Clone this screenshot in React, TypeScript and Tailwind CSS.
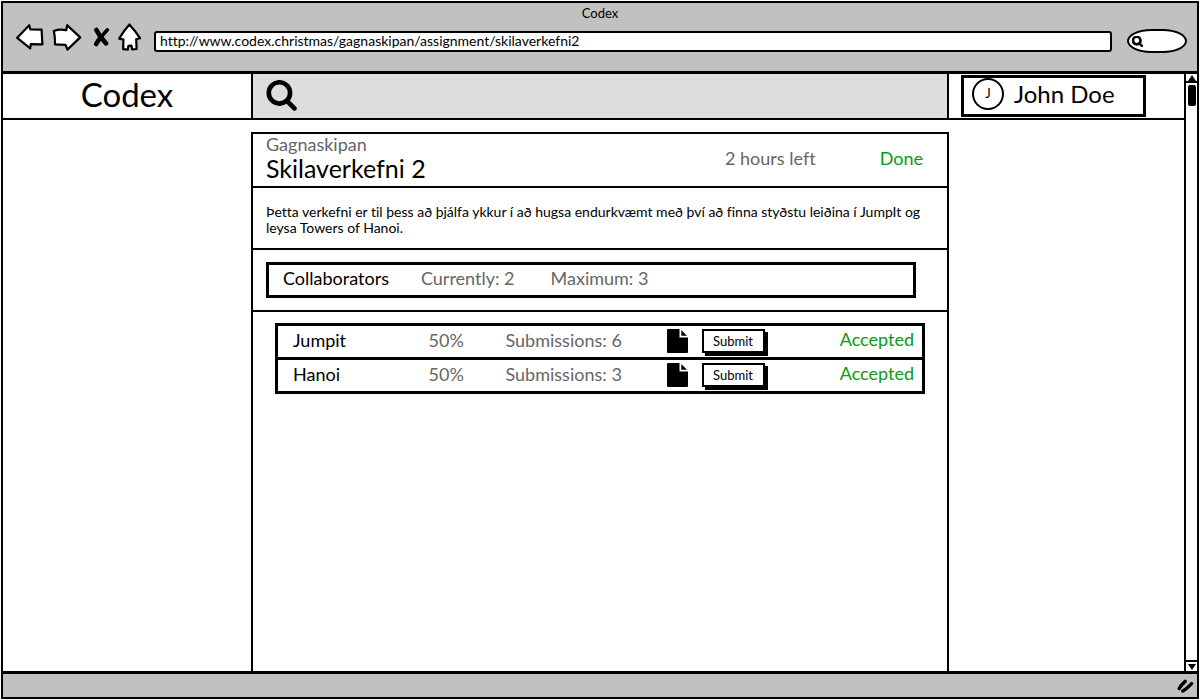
import React from "react";

type Task = {
  name: string;
  weight: string;
  submissions: number;
  status: string;
};

const tasks: Task[] = [
  { name: "Jumpit", weight: "50%", submissions: 6, status: "Accepted" },
  { name: "Hanoi", weight: "50%", submissions: 3, status: "Accepted" },
];

function BackIcon() {
  return (
    <svg width="28" height="28" viewBox="0 0 28 28" fill="white" stroke="black" strokeWidth="2.2" strokeLinejoin="round" aria-hidden="true">
      <path d="M1.2 14.8 13.2 2.2 14.4 6.5 25.600 6.600 26.400 21.400 14.800 21.200 14.200 25.400Z" />
    </svg>
  );
}

function ForwardIcon() {
  return (
    <svg width="30" height="28" viewBox="0 0 30 28" fill="white" stroke="black" strokeWidth="2.2" strokeLinejoin="round" aria-hidden="true">
      <path d="M1.800 8Q7.500 5.800 14.200 7.200L15.200 2.200 28.200 14.400 15.400 26.600 13.600 21.800 3 21.400Q3.200 14 1.800 8Z" />
    </svg>
  );
}

function StopIcon() {
  return (
    <svg width="17" height="20" viewBox="0 0 17 20" fill="none" stroke="black" strokeLinecap="round" aria-hidden="true">
      <path d="M3.400 3Q6.500 9.500 13 16.400" strokeWidth="4.600" />
      <path d="M14.400 2.800Q10.500 7 8 10.400" strokeWidth="3.600" />
      <path d="M8 10.400Q5 13.500 3.200 17" strokeWidth="4.600" />
    </svg>
  );
}

function HomeIcon() {
  return (
    <svg width="24" height="28" viewBox="0 0 24 28" fill="white" stroke="black" strokeWidth="2.2" strokeLinejoin="round" aria-hidden="true">
      <path d="M11.400 1.400Q17.500 8 22 15.200L18.200 16.200 18.600 26 14.200 26.400 13.400 22.600 10.400 22.800 9.800 26.600 5.200 26.200 5.400 16.600 1.200 15.600Q5.500 8 11.400 1.400Z" />
    </svg>
  );
}

function SearchIcon({ className, weight }: { className: string; weight: number }) {
  return (
    <svg className={className} viewBox="0 0 30 30" fill="none" stroke="black" strokeWidth={weight} strokeLinecap="round" aria-hidden="true">
      <circle cx="13" cy="12.500" r="10.300" />
      <path d="M20.500 20.500 27.500 27.500" />
    </svg>
  );
}

function DocumentIcon() {
  return (
    <svg className="block h-6 w-[21px]" viewBox="0 0 21 24" aria-hidden="true">
      <path d="M1 0H12.500V8.500H21V23Q21 24 20 24H1Q0 24 0 23V1Q0 0 1 0Z" />
      <path d="M14.300 1 20 6.700H14.300Z" />
    </svg>
  );
}

function Toolbar() {
  return (
    <div className="border-b-3 border-black bg-[#c1c1c1] pb-[18px]">
      <h1 className="text-center text-[13px] leading-5">Codex</h1>
      <div className="flex h-[30px] items-end pl-[13px] pr-[10px]">
        <nav className="flex items-center self-start" aria-label="Browser">
          <button type="button" aria-label="Back" className="mr-2"><BackIcon /></button>
          <button type="button" aria-label="Forward" className="mr-[11px]"><ForwardIcon /></button>
          <button type="button" aria-label="Stop" className="mr-2"><StopIcon /></button>
          <button type="button" aria-label="Home" className="mr-3"><HomeIcon /></button>
        </nav>
        <input
          type="text"
          aria-label="Address"
          defaultValue="http://www.codex.christmas/gagnaskipan/assignment/skilaverkefni2"
          className="mb-px h-[21px] min-w-0 flex-1 rounded-[3px] border-2 border-black bg-white px-1 pb-0.5 text-[14px] leading-4 outline-none"
        />
        <label className="ml-[15px] flex h-6 w-[60px] items-center rounded-[40%/50%] border-2 border-black bg-white pl-[3px]">
          <SearchIcon className="size-[11px] shrink-0" weight={7} />
          <input type="search" aria-label="Web search" className="w-full min-w-0 bg-transparent text-[13px] outline-none" />
        </label>
      </div>
    </div>
  );
}

function SiteHeader() {
  return (
    <header className="grid h-[46px] grid-cols-[248px_1fr_235px] border-b-2 border-black">
      <a href="#home" className="flex items-center justify-center pb-1 text-[33px] leading-9">Codex</a>
      <label className="flex items-center border-x-2 border-black bg-[#dddddd] pb-0.5 pl-[13px]">
        <SearchIcon className="size-[31px] shrink-0" weight={4.500} />
        <input type="search" aria-label="Search" className="min-w-0 flex-1 bg-transparent px-3 text-xl outline-none" />
      </label>
      <div className="flex items-center pl-3">
        <button type="button" className="flex h-[42px] w-[185px] items-center gap-2.5 border-3 border-black bg-white pb-1 pl-2">
          <span className="flex size-8 items-center justify-center rounded-full border-2 border-black text-[13px]">J</span>
          <span className="text-[24px] leading-7">John Doe</span>
        </button>
      </div>
    </header>
  );
}

function TaskTable() {
  return (
    <table className="w-full table-fixed border-collapse text-left text-[18px] leading-5">
      <colgroup>
        <col className="w-[152px]" />
        <col className="w-[77px]" />
        <col className="w-[161px]" />
        <col className="w-[35px]" />
        <col />
        <col className="w-[101px]" />
      </colgroup>
      <tbody>
        {tasks.map((task) => (
          <tr key={task.name} className="h-[34px] border-3 border-black">
            <th scope="row" className="pb-1 pl-[15px] font-normal">{task.name}</th>
            <td className="pb-1 text-[#666666]">{task.weight}</td>
            <td className="pb-1 text-[#666666]">Submissions: {task.submissions}</td>
            <td className="pb-0.5"><DocumentIcon /></td>
            <td className="pb-0.5">
              <button
                type="button"
                className="block h-6 w-[63px] border-2 border-black bg-white text-[13px] leading-4 shadow-[3px_3px_0_0_#000]"
              >
                Submit
              </button>
            </td>
            <td className="pb-1.5 pr-2 text-right text-[#0a9a14]">{task.status}</td>
          </tr>
        ))}
      </tbody>
    </table>
  );
}

function Assignment() {
  return (
    <main className="mt-3 border-2 border-b-0 border-black">
      <section className="flex items-center border-b-2 border-black pb-1 pl-[13px] pr-6">
        <div className="flex-1">
          <p className="text-[18px] leading-5 text-[#666666]">Gagnaskipan</p>
          <h2 className="text-[25px] leading-7">Skilaverkefni 2</h2>
        </div>
        <p className="mr-16 text-[18px] leading-5 text-[#666666]">2 hours left</p>
        <p className="text-[18px] leading-5 text-[#0a9a14]">Done</p>
      </section>
      <section className="border-b-2 border-black pb-3 pl-[13px] pr-6 pt-4">
        <p className="text-[14px] leading-4">
          Þetta verkefni er til þess að þjálfa ykkur í að hugsa endurkvæmt með því að finna styðstu leiðina í JumpIt og leysa Towers of Hanoi.
        </p>
      </section>
      <section className="border-b-2 border-black py-3 pl-[13px] pr-[31px]">
        <div className="flex h-9 items-center gap-8 border-3 border-black pb-1 pl-[14px] text-[18px] leading-5">
          <h3>Collaborators</h3>
          <p className="text-[#666666]">Currently: 2</p>
          <p className="pl-1 text-[#666666]">Maximum: 3</p>
        </div>
      </section>
      <section className="px-[22px] pb-8 pt-[11px]">
        <TaskTable />
      </section>
    </main>
  );
}

function Scrollbar() {
  return (
    <div className="flex w-[13px] flex-col border-l-2 border-black bg-white" aria-hidden="true">
      <div className="flex h-[9px] items-center justify-center border-b-2 border-black">
        <svg width="8" height="6" viewBox="0 0 8 6"><path d="M4 0 8 6H0Z" /></svg>
      </div>
      <div className="mx-auto mt-0.5 h-[21px] w-2 rounded-[2px] bg-black" />
      <div className="mt-auto flex h-[11px] items-center justify-center border-t-2 border-black">
        <svg width="8" height="6" viewBox="0 0 8 6"><path d="M0 0H8L4 6Z" /></svg>
      </div>
    </div>
  );
}

export default function App() {
  return (
    <div className="flex min-h-screen bg-white p-px font-['Lato','Noto_Sans',sans-serif] text-black [font-variant-ligatures:none]">
      <div className="flex flex-1 flex-col border-2 border-black">
        <Toolbar />
        <div className="flex flex-1">
          <div className="flex min-w-0 flex-1 flex-col">
            <SiteHeader />
            <div className="grid flex-1 grid-cols-[248px_1fr_235px]">
              <aside />
              <Assignment />
            </div>
          </div>
          <Scrollbar />
        </div>
        <footer className="flex h-[26px] items-center justify-end border-t-3 border-black bg-[#c1c1c1] pr-[3px]">
          <svg width="17" height="14" viewBox="0 0 17 14" fill="none" stroke="black" strokeWidth="3.400" strokeLinecap="round" aria-hidden="true">
            <path d="M2.200 9.600Q4 6 8.200 2.400M5.800 12Q9 10.400 14.600 4.600" />
          </svg>
        </footer>
      </div>
    </div>
  );
}
